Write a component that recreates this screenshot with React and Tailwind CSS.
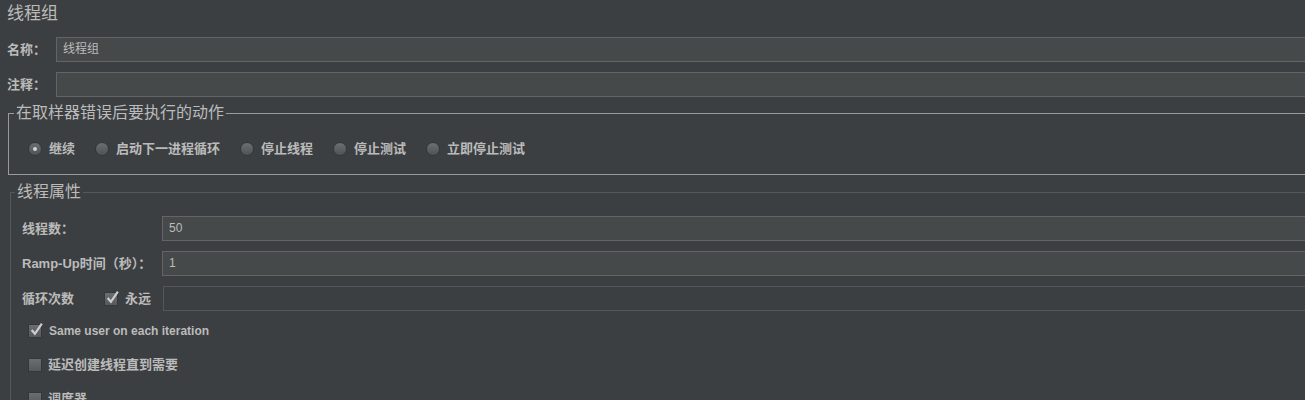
const radios = [
  { label: '继续', checked: true },
  { label: '启动下一进程循环' },
  { label: '停止线程' },
  { label: '停止测试' },
  { label: '立即停止测试' },
]

function Radio({ checked, label }) {
  return (
    <label className="flex items-center gap-[7px]">
      <span className="flex h-[14px] w-[14px] items-center justify-center rounded-full border border-[#34373a] bg-gradient-to-b from-[#6b6f72] to-[#4f5356]">
        {checked && <span className="h-[4px] w-[4px] rounded-full bg-[#d4d4d4]" />}
      </span>
      <span>{label}</span>
    </label>
  )
}

function Checkbox({ checked }) {
  return (
    <span className="relative flex h-[14px] w-[14px] shrink-0 items-center justify-center border border-[#35383b] bg-gradient-to-b from-[#6a6e71] to-[#55595c]">
      {checked && (
        <svg viewBox="0 0 14 14" className="absolute -top-[3px] left-[0px] h-[15px] w-[15px]">
          <path d="M2.5 7.5 L5.5 11 L12 1.5" fill="none" stroke="#cfcfcf" strokeWidth="2" />
        </svg>
      )}
    </span>
  )
}

function Field({ value = '', disabled }) {
  return (
    <div
      className={
        disabled
          ? 'h-[25px] flex-1 -mr-[6px] border border-[#54575a] bg-[#3c3f41]'
          : 'h-[25px] flex-1 -mr-[6px] border border-[#646464] bg-[#45494a] pl-[6px] text-[12px] leading-[23px] font-normal text-[#bbbbbb]'
      }
    >
      {value}
    </div>
  )
}

export default function App() {
  return (
    <div className="h-[400px] w-[1305px] overflow-hidden bg-[#3c3f41] font-['Liberation_Sans','Noto_Sans_CJK_SC',sans-serif] text-[13px] font-bold text-[#bbbbbb]">
      <div className="h-[26px] pl-[7px] pt-[3px] text-[17px] font-normal leading-[22px]">线程组</div>

      <div className="mt-[11px] flex items-center pl-[7px]">
        <span className="w-[49px]">名称：</span>
        <Field value="线程组" />
      </div>

      <div className="mt-[10px] flex items-center pl-[7px]">
        <span className="w-[49px]">注释：</span>
        <Field />
      </div>

      {/* 取样器错误 */}
      <fieldset className="mt-[6px] ml-[8px] -mr-[10px] h-[72px] border border-[#9b9b9b]">
        <legend className="ml-[5px] px-[2px] text-[16px] font-normal leading-[20px]">在取样器错误后要执行的动作</legend>
        <div className="flex h-[51px] items-center gap-[20px] pl-[19px] pt-[1px]">
          {radios.map((r) => (
            <Radio key={r.label} label={r.label} checked={r.checked} />
          ))}
        </div>
      </fieldset>

      {/* 线程属性 */}
      <fieldset className="mt-[7px] ml-[10px] -mr-[10px] border border-[#55595c]">
        <legend className="ml-[4px] px-[2px] text-[16px] font-normal leading-[20px]">线程属性</legend>

        <div className="pl-[11px] pt-[14px]">
          <div className="flex items-center">
            <span className="w-[140px]">线程数：</span>
            <Field value="50" />
          </div>
          <div className="mt-[10px] flex items-center">
            <span className="w-[140px]">Ramp-Up时间（秒）：</span>
            <Field value="1" />
          </div>
          <div className="mt-[10px] flex items-center">
            <span className="w-[82px]">循环次数</span>
            <Checkbox checked />
            <span className="ml-[7px] w-[38px]">永远</span>
            <Field disabled />
          </div>

          <div className="mt-[3px] flex h-[34px] items-center gap-[7px] pl-[6px]">
            <Checkbox checked />
            <span className="text-[12px]">Same user on each iteration</span>
          </div>
          <div className="flex h-[34px] items-center gap-[6px] pl-[6px]">
            <Checkbox />
            <span>延迟创建线程直到需要</span>
          </div>
          <div className="flex h-[34px] items-center gap-[6px] pl-[6px]">
            <Checkbox />
            <span>调度器</span>
          </div>
        </div>
      </fieldset>
    </div>
  )
}
